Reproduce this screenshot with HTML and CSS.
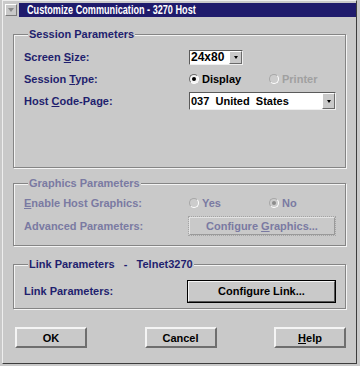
FILE: index.html
```html
<!DOCTYPE html>
<html>
<head>
    <meta charset="utf-8">
    <title>Customize Communication - 3270 Host</title>
    <link rel="stylesheet" href="styles.css">
</head>
<body>

<div class="window">
    <div class="titlerow">
        <div class="sysmenu"><span class="sysarrow"></span></div>
        <div class="titlebar"><span class="titletext">Customize Communication - 3270 Host</span></div>
    </div>

    <div class="content">
        <fieldset class="group group-session">
            <legend>Session Parameters</legend>
            <div class="rows">
                <div class="label">Screen <u>S</u>ize:</div>
                <div class="ctl">
                    <div class="combo combo-small">
                        <span class="combo-text">24x80</span>
                        <span class="combo-btn"><span class="arrow"></span></span>
                    </div>
                </div>

                <div class="label">Session <u>T</u>ype:</div>
                <div class="ctl radios">
                    <span class="radio"><span class="dot checked"></span>Display</span>
                    <span class="radio disabled"><span class="dot"></span>Printer</span>
                </div>

                <div class="label">Host <u>C</u>ode-Page:</div>
                <div class="ctl">
                    <div class="combo combo-wide">
                        <span class="combo-text">037&nbsp; United&nbsp; States</span>
                        <span class="combo-btn"><span class="arrow"></span></span>
                    </div>
                </div>
            </div>
        </fieldset>

        <fieldset class="group group-graphics disabled">
            <legend>Graphics Parameters</legend>
            <div class="rows">
                <div class="label row-a"><span><u>E</u>nable Host Graphics:</span></div>
                <div class="ctl radios row-a">
                    <span class="radio"><span class="dot"></span>Yes</span>
                    <span class="radio"><span class="dot checked"></span>No</span>
                </div>

                <div class="label row-b"><span>Advanced Parameters:</span></div>
                <div class="ctl row-b">
                    <div class="button button-wide button-off"><span>Configure <u>G</u>raphics...</span></div>
                </div>
            </div>
        </fieldset>

        <fieldset class="group group-link">
            <legend>Link Parameters&nbsp;&nbsp; -&nbsp;&nbsp; Telnet3270</legend>
            <div class="rows">
                <div class="label row-b"><span>Link Parameters:</span></div>
                <div class="ctl row-b">
                    <div class="button button-wide button-default"><span>Configure Link...</span></div>
                </div>
            </div>
        </fieldset>

        <div class="buttons">
            <div class="button"><span>OK</span></div>
            <div class="button"><span>Cancel</span></div>
            <div class="button"><span><u>H</u>elp</span></div>
        </div>
    </div>
</div>

</body>
</html>
```

FILE: styles.css
```css
/* dialog look */
body {
    margin: 0;
    background-color: #c9c9c9;
    font-family: "Liberation Sans", Arial, sans-serif;
    font-size: 11px;
    font-weight: bold;
}

.window {
    width: 355px;
    height: 364px;
    margin-left: 2px;
    border-left: 1px solid #eeeeee;
    border-top: 1px solid #eeeeee;
    border-right: 1px solid #3c3c3c;
    border-bottom: 1px solid #3c3c3c;
    box-sizing: border-box;
}

.titlerow {
    display: flex;
    height: 14px;
    margin-top: 2px;
    padding-left: 2px;
    gap: 2px;
}

.sysmenu {
    width: 12px;
    height: 12px;
    margin-top: 1px;
    background-color: #c9c9c9;
    border-top: 1px solid #ffffff;
    border-left: 1px solid #ffffff;
    border-right: 1px solid #7a7a7a;
    border-bottom: 1px solid #7a7a7a;
    box-sizing: border-box;
    display: flex;
    justify-content: center;
    padding-top: 3px;
}

.sysarrow {
    width: 0;
    height: 0;
    border-left: 3px solid transparent;
    border-right: 3px solid transparent;
    border-top: 4px solid #8a8a8a;
}

.titlebar {
    flex: 1;
    background-color: #1f1b6c;
    color: #ffffff;
    line-height: 14px;
    padding-left: 8px;
    white-space: nowrap;
    overflow: hidden;
}

.titletext {
    display: inline-block;
    font-size: 12px;
    transform: scaleX(0.76);
    transform-origin: left center;
}

.content {
    padding-left: 10px;
    padding-right: 10px;
}

.group {
    margin: 0;
    padding: 0 0 0 10px;
    border: 1px solid #858585;
    box-shadow: inset 1px 1px 0 #f4f4f4, 1px 1px 0 #f4f4f4;
    min-width: 0;
}

.group legend {
    margin-left: 4px;
    padding: 0 1px;
    line-height: 13px;
    color: #1f1f6e;
    background-color: #c9c9c9;
}

.group-session {
    margin-top: 11px;
    padding-top: 5px;
    padding-bottom: 55px;
}

.group-graphics {
    margin-top: 9px;
    padding-top: 2px;
    padding-bottom: 7px;
}

.group-link {
    margin-top: 12px;
    padding-top: 8px;
    padding-bottom: 5px;
}

.rows {
    display: grid;
    grid-template-columns: 165px 1fr;
    grid-auto-rows: 22px;
    align-items: center;
}

.label {
    color: #1f1f6e;
    white-space: nowrap;
}

.row-a {
    height: 22px;
    display: flex;
    align-items: center;
}

.row-b {
    height: 24px;
    display: flex;
    align-items: center;
}

.group-graphics .rows,
.group-link .rows {
    grid-auto-rows: auto;
}

.ctl {
    display: flex;
    align-items: center;
}

u {
    text-decoration-thickness: 1px;
    text-underline-offset: 1px;
}

/* combo boxes */
.combo {
    display: flex;
    background-color: #ffffff;
    border-top: 1px solid #5a5a5a;
    border-left: 1px solid #5a5a5a;
    border-right: 1px solid #f0f0f0;
    border-bottom: 1px solid #f0f0f0;
    box-sizing: border-box;
    color: #000000;
}

.combo-small {
    width: 54px;
    height: 15px;
}

.combo-small .combo-text {
    font-size: 12px;
}

.combo-wide {
    width: 147px;
    height: 18px;
}

.combo-text {
    flex: 1;
    padding-left: 1px;
    display: flex;
    align-items: center;
    white-space: nowrap;
}

.combo-btn {
    width: 11px;
    background-color: #c9c9c9;
    border-top: 1px solid #ffffff;
    border-left: 1px solid #ffffff;
    border-right: 1px solid #6a6a6a;
    border-bottom: 1px solid #6a6a6a;
    display: flex;
    align-items: center;
    justify-content: center;
}

.arrow {
    width: 0;
    height: 0;
    border-left: 2px solid transparent;
    border-right: 2px solid transparent;
    border-top: 3px solid #000000;
}

/* radio buttons */
.radio {
    display: flex;
    align-items: center;
    width: 80px;
    color: #000000;
}

.dot {
    width: 10px;
    height: 10px;
    margin-right: 3px;
    border-radius: 50%;
    border-top: 1px solid #6a6a6a;
    border-left: 1px solid #6a6a6a;
    border-right: 1px solid #ffffff;
    border-bottom: 1px solid #ffffff;
    background-color: #f4f4f4;
    box-sizing: border-box;
    display: flex;
    align-items: center;
    justify-content: center;
}

.dot.checked::after {
    content: "";
    width: 4px;
    height: 4px;
    border-radius: 50%;
    background-color: #000000;
}

.radio.disabled,
.disabled .radio {
    color: #a0a0a0;
}

.disabled .dot,
.radio.disabled .dot {
    border-top-color: #a8a8a8;
    border-left-color: #a8a8a8;
    background-color: #cccccc;
}

.disabled .dot.checked::after {
    background-color: #8c8c8c;
}

.disabled legend,
.disabled .label,
.disabled .radio {
    color: #7a7aa2;
}

/* push buttons */
.buttons {
    display: flex;
    justify-content: space-between;
    margin-top: 18px;
    padding-left: 2px;
}

.button {
    width: 72px;
    height: 21px;
    box-sizing: border-box;
    border-top: 2px solid #f4f4f4;
    border-left: 2px solid #f4f4f4;
    border-right: 2px solid #6e6e6e;
    border-bottom: 2px solid #6e6e6e;
    background-color: #c9c9c9;
    color: #000000;
    display: flex;
    align-items: center;
    justify-content: center;
    white-space: nowrap;
}

.button-wide {
    width: 146px;
    height: 18px;
}

.button-off {
    color: #7a7aa2;
    border-top: 1px solid #e4e4e4;
    border-left: 1px solid #e4e4e4;
    border-right: 1px solid #9a9a9a;
    border-bottom: 1px solid #9a9a9a;
    outline: 1px dotted #a4a4a4;
}

.button-default {
    width: 149px;
    height: 23px;
    margin-left: -2px;
    outline: 1px solid #000000;
    outline-offset: -1px;
    border-right-color: #555555;
    border-bottom-color: #555555;
}
```
